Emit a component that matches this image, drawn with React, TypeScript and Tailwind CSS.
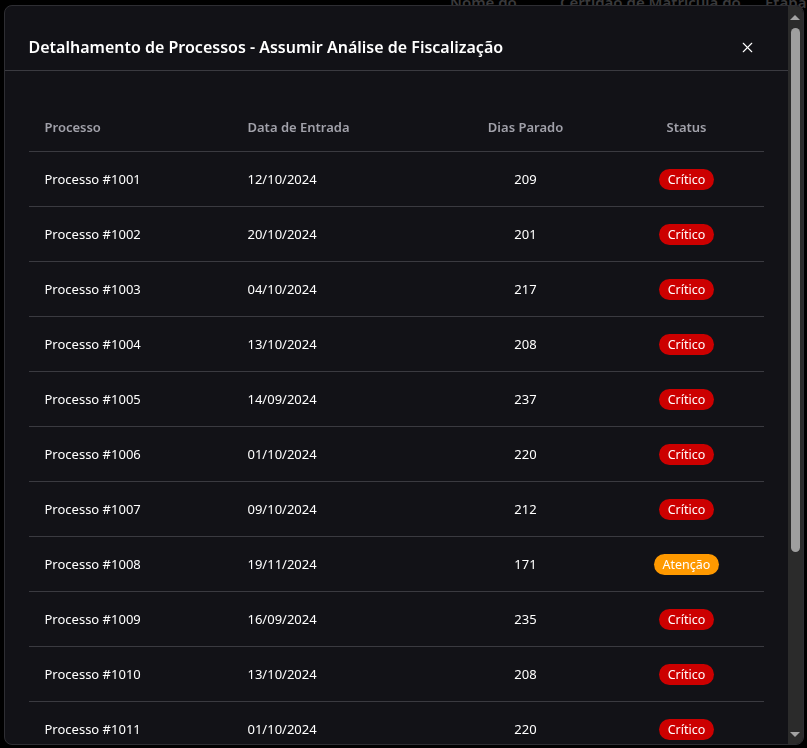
import React from "react";
import { X } from "lucide-react";

type Row = { id: number; data: string; dias: number; status: "Crítico" | "Atenção" };

const rows: Row[] = [
  { id: 1001, data: "12/10/2024", dias: 209, status: "Crítico" },
  { id: 1002, data: "20/10/2024", dias: 201, status: "Crítico" },
  { id: 1003, data: "04/10/2024", dias: 217, status: "Crítico" },
  { id: 1004, data: "13/10/2024", dias: 208, status: "Crítico" },
  { id: 1005, data: "14/09/2024", dias: 237, status: "Crítico" },
  { id: 1006, data: "01/10/2024", dias: 220, status: "Crítico" },
  { id: 1007, data: "09/10/2024", dias: 212, status: "Crítico" },
  { id: 1008, data: "19/11/2024", dias: 171, status: "Atenção" },
  { id: 1009, data: "16/09/2024", dias: 235, status: "Crítico" },
  { id: 1010, data: "13/10/2024", dias: 208, status: "Crítico" },
  { id: 1011, data: "01/10/2024", dias: 220, status: "Crítico" },
  { id: 1012, data: "07/10/2024", dias: 214, status: "Crítico" },
  { id: 1013, data: "22/10/2024", dias: 199, status: "Crítico" },
  { id: 1014, data: "18/09/2024", dias: 233, status: "Crítico" },
  { id: 1015, data: "25/10/2024", dias: 196, status: "Crítico" },
];

const StatusBadge: React.FC<{ status: Row["status"] }> = ({ status }) =>
  status === "Crítico" ? (
    <span className="inline-block rounded-full bg-[#cc0000] px-[9px] py-[2px] text-[12.5px] leading-[17px] text-white">
      Crítico
    </span>
  ) : (
    <span className="inline-block rounded-full bg-[#ff9900] px-[9px] py-[2px] text-[12.5px] leading-[17px] text-white">
      Atenção
    </span>
  );

// barra de rolagem desenhada (o headless nao mostra a nativa)
const FakeScrollbar: React.FC = () => (
  <div className="flex w-[15px] shrink-0 flex-col items-center bg-[#2b2b2b]">
    <div className="flex h-[22px] items-center justify-center">
      <div className="h-0 w-0 border-x-[5px] border-b-[5px] border-x-transparent border-b-[#a3a3a3]" />
    </div>
    <div className="h-[524px] w-[9px] rounded-full bg-[#9f9f9f]" />
    <div className="flex-1" />
    <div className="flex h-[20px] items-center justify-center">
      <div className="h-0 w-0 border-x-[5px] border-t-[5px] border-x-transparent border-t-[#a3a3a3]" />
    </div>
  </div>
);

export default function App() {
  return (
    <div
      className="relative h-[748px] w-full overflow-hidden bg-black"
      style={{ fontFamily: '"Noto Sans", "Open Sans", sans-serif' }}
    >
      {/* pagina por tras do modal */}
      <div className="flex -mt-[9px] pl-[450px] text-[15px] font-semibold text-[#3a3a3c]">
        <span className="w-[110px]">Nome do</span>
        <span className="w-[205px]">Certidão de Matrícula do</span>
        <span>Etapa</span>
      </div>

      <div className="fixed inset-0 flex items-start justify-center pt-[5px]">
        <div className="flex h-[740px] w-[800px] overflow-hidden rounded-lg border border-[#2e2e33] bg-[#121217]">
          <div className="min-w-0 flex-1 overflow-hidden">
            <div className="flex h-[65px] items-center justify-between border-b border-[#3a3a40] px-6 pt-[18px]">
              <h2 className="text-[16px] font-semibold leading-6 text-white">
                Detalhamento de Processos - Assumir Análise de Fiscalização
              </h2>
              <button className="p-2 text-white">
                <X size={17} strokeWidth={1.6} />
              </button>
            </div>

            <div className="px-6 pt-8 pb-6">
              <table className="w-full table-fixed border-collapse text-[13px]">
                <colgroup>
                  <col className="w-[203px]" />
                  <col className="w-[210px]" />
                  <col className="w-[168px]" />
                  <col className="w-[154px]" />
                </colgroup>
                <thead>
                  <tr className="border-b border-[#3a3a40] text-[13px] text-[#a1a1aa]">
                    <th className="px-4 py-[14px] text-left font-semibold leading-5">Processo</th>
                    <th className="px-4 py-[14px] text-left font-semibold leading-5">Data de Entrada</th>
                    <th className="px-4 py-[14px] text-center font-semibold leading-5">Dias Parado</th>
                    <th className="px-4 py-[14px] text-center font-semibold leading-5">Status</th>
                  </tr>
                </thead>
                <tbody>
                  {rows.map((r) => (
                    <tr key={r.id} className="border-b border-[#3a3a40] text-white">
                      <td className="px-4 py-[17px] leading-5">Processo #{r.id}</td>
                      <td className="px-4 py-[17px] leading-5">{r.data}</td>
                      <td className="px-4 py-[17px] text-center leading-5">{r.dias}</td>
                      <td className="px-4 py-[16px] text-center leading-5">
                        <StatusBadge status={r.status} />
                      </td>
                    </tr>
                  ))}
                </tbody>
              </table>
            </div>
          </div>
          <FakeScrollbar />
        </div>
      </div>
    </div>
  );
}
